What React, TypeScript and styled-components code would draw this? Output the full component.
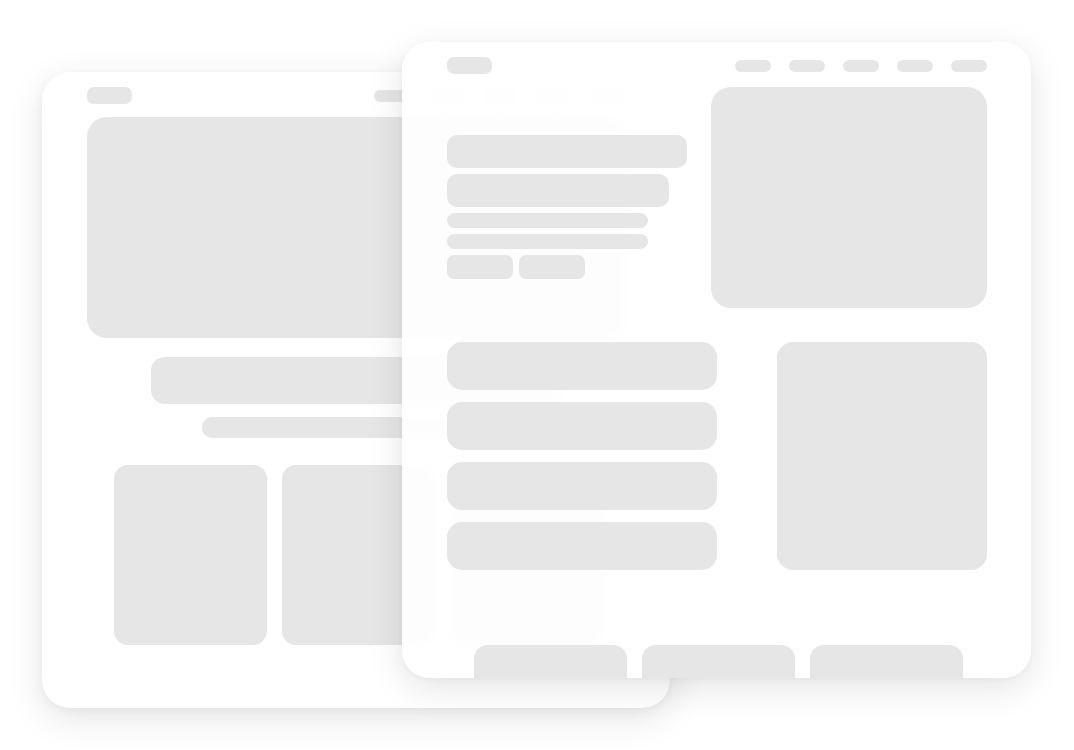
import React from 'react'
import styled, { createGlobalStyle } from 'styled-components'

const GlobalStyle = createGlobalStyle`
  html, body {
    margin: 0;
    padding: 0;
    background: #ffffff;
    font-family: 'Liberation Sans', Arial, sans-serif;
  }
  body {
    overflow: hidden;
  }
`

const GREY = '#e6e6e6'

const Stage = styled.div`
  position: relative;
  width: 1074px;
  height: 750px;
  background: #ffffff;
  overflow: hidden;
`

// two browser-like windows stacked on a free canvas
const Window = styled.div<{ $x: number; $y: number; $w: number; $glass?: boolean }>`
  position: absolute;
  left: ${(p) => p.$x}px;
  top: ${(p) => p.$y}px;
  width: ${(p) => p.$w}px;
  height: 636px;
  box-sizing: border-box;
  padding: 15px 44px 0 45px;
  border-radius: 28px;
  overflow: hidden;
  display: flex;
  flex-direction: column;
  background: ${(p) => (p.$glass ? 'rgba(255, 255, 255, 0.9)' : '#ffffff')};
  backdrop-filter: ${(p) => (p.$glass ? 'blur(6px)' : 'none')};
  box-shadow: 0 10px 36px rgba(0, 0, 0, 0.11), 0 2px 10px rgba(0, 0, 0, 0.04);
`

const Header = styled.div`
  display: flex;
  align-items: center;
  justify-content: space-between;
  height: 17px;
  flex-shrink: 0;
`

const Logo = styled.div`
  width: 45px;
  height: 17px;
  border-radius: 7px;
  background: ${GREY};
`

const Nav = styled.div`
  display: flex;
  gap: 18px;
`

const NavPill = styled.div`
  width: 36px;
  height: 12px;
  border-radius: 6px;
  background: ${GREY};
`

const Block = styled.div<{ $w?: number; $h: number; $r?: number }>`
  width: ${(p) => (p.$w ? `${p.$w}px` : '100%')};
  height: ${(p) => p.$h}px;
  border-radius: ${(p) => p.$r ?? 16}px;
  background: ${GREY};
  flex-shrink: 0;
`

/* back window */
const BackBody = styled.div`
  display: flex;
  flex-direction: column;
  align-items: center;
  padding-top: 13px;
`

const Centered = styled.div<{ $top: number }>`
  margin-top: ${(p) => p.$top}px;
  display: flex;
  justify-content: center;
  width: 100%;
`

const CardRow = styled.div<{ $top: number }>`
  display: flex;
  gap: 15px;
  align-self: flex-start;
  margin-left: 27px;
  margin-top: ${(p) => p.$top}px;
`

/* front window */
const TopGrid = styled.div`
  display: grid;
  grid-template-columns: 1fr 276px;
  column-gap: 24px;
  margin-top: 13px;
`

const Intro = styled.div`
  display: flex;
  flex-direction: column;
  gap: 6px;
  padding-top: 48px;
`

const Buttons = styled.div`
  display: flex;
  gap: 6px;
`

const SecondRow = styled.div`
  display: flex;
  justify-content: space-between;
  margin-top: 34px;
`

const List = styled.div`
  display: flex;
  flex-direction: column;
  gap: 12px;
`

const NavItems = () => (
  <Nav>
    {[0, 1, 2, 3, 4].map((i) => (
      <NavPill key={i} />
    ))}
  </Nav>
)

const Cards = ({ top }: { top: number }) => (
  <CardRow $top={top}>
    {[0, 1, 2].map((i) => (
      <Block key={i} $w={153} $h={180} $r={14} />
    ))}
  </CardRow>
)

export default function App() {
  return (
    <>
      <GlobalStyle />
      <Stage>
        <Window $x={42} $y={72} $w={628}>
          <Header>
            <Logo />
            <NavItems />
          </Header>
          <BackBody>
            <Block $h={221} $r={20} />
            <Centered $top={19}>
              <Block $w={412} $h={47} $r={14} />
            </Centered>
            <Centered $top={13}>
              <Block $w={310} $h={21} $r={10} />
            </Centered>
            <Cards top={27} />
          </BackBody>
        </Window>

        <Window $x={402} $y={42} $w={629} $glass>
          <Header>
            <Logo />
            <NavItems />
          </Header>
          <TopGrid>
            <Intro>
              <Block $h={33} $r={10} />
              <Block $w={222} $h={33} $r={10} />
              <Block $w={201} $h={15} $r={8} />
              <Block $w={201} $h={15} $r={8} />
              <Buttons>
                <Block $w={66} $h={24} $r={7} />
                <Block $w={66} $h={24} $r={7} />
              </Buttons>
            </Intro>
            <Block $h={221} $r={20} />
          </TopGrid>
          <SecondRow>
            <List>
              {[0, 1, 2, 3].map((i) => (
                <Block key={i} $w={270} $h={48} $r={15} />
              ))}
            </List>
            <Block $w={210} $h={228} $r={16} />
          </SecondRow>
          <Cards top={75} />
        </Window>
      </Stage>
    </>
  )
}
